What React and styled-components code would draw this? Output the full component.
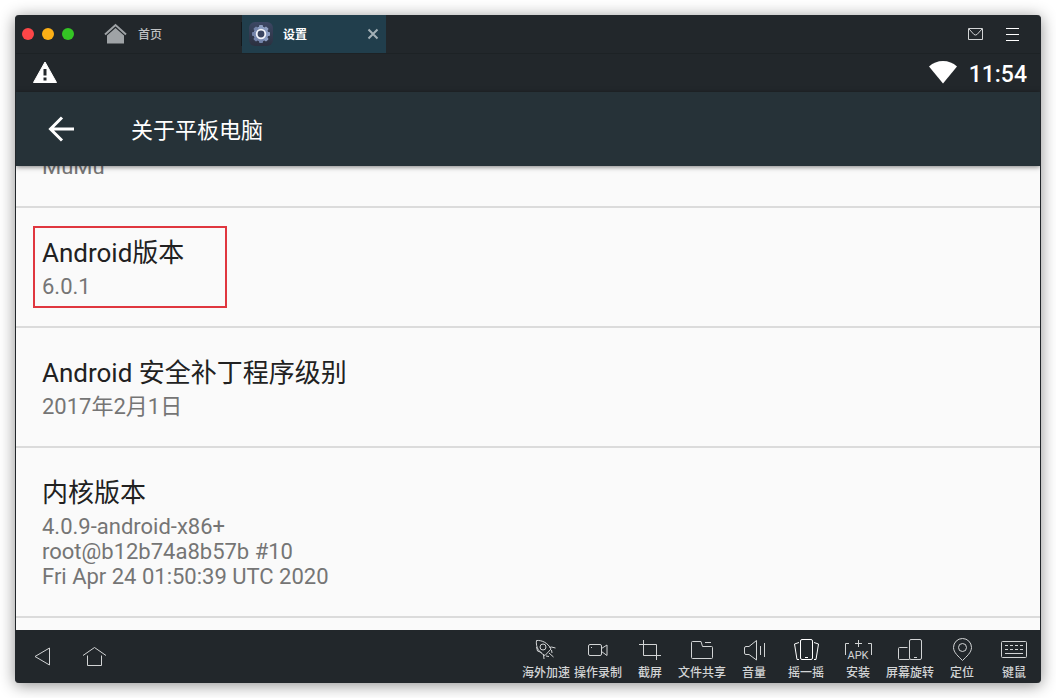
import React from "react";
import styled, { createGlobalStyle } from "styled-components";

const GlobalStyle = createGlobalStyle`
  *, *::before, *::after { box-sizing: border-box; }
  body {
    margin: 0;
    background: #ffffff;
    font-family: Roboto, "Noto Sans CJK SC", sans-serif;
  }
  button {
    border: 0;
    padding: 0;
    background: none;
    color: inherit;
    font: inherit;
    cursor: pointer;
  }
  svg { display: block; flex: none; }
`;

const Page = styled.div`
  display: flex;
  min-height: 100vh;
  padding: 15px;
`;

const Window = styled.div`
  flex: 1;
  min-width: 0;
  display: flex;
  flex-direction: column;
  overflow: hidden;
  background: #22272b;
  border: solid #22272b;
  border-width: 0 1px;
  border-radius: 4px;
  box-shadow: 0 2px 16px rgba(0, 0, 0, 0.45);
`;

const TitleBar = styled.header`
  display: flex;
  height: 38px;
  align-items: center;
  padding-right: 20px;
`;

const TrafficLights = styled.div`
  display: flex;
  gap: 8px;
  padding-left: 6px;
`;

const Light = styled.button`
  width: 12px;
  height: 12px;
  border-radius: 50%;
  background: ${(p) => p.$color};
`;

const HomeTab = styled.button`
  display: flex;
  align-items: center;
  gap: 11px;
  width: 168px;
  height: 24px;
  padding-left: 30px;
  border-right: 1px solid #14181b;
  font-size: 12px;
  font-weight: 500;
  line-height: 20px;
  color: #c0c2c4;
`;

const ActiveTab = styled.div`
  display: flex;
  align-items: center;
  width: 144px;
  height: 38px;
  padding: 0 7px;
  background: #213e4c;
  color: #ffffff;
  font-size: 12px;
  font-weight: 700;
  line-height: 20px;
`;

const TabButton = styled.button`
  flex: 1;
  display: flex;
  align-items: center;
  gap: 10px;
`;

const TabText = styled.span`
  padding-top: 2px;
`;

const TitleActions = styled.div`
  display: flex;
  gap: 20px;
  margin-left: auto;
`;

const StatusBar = styled.div`
  display: flex;
  align-items: center;
  height: 39px;
  padding: 0 13px 0 16px;
  border-top: 1px solid #1d2225;
  color: #ffffff;
`;

const StatusRight = styled.div`
  display: flex;
  align-items: center;
  gap: 12px;
  margin-left: auto;
  font-size: 23px;
  font-weight: 500;
  line-height: 34px;
`;

const Clock = styled.time`
  padding-top: 4px;
`;

const AppBar = styled.div`
  position: relative;
  z-index: 1;
  display: flex;
  align-items: center;
  gap: 52px;
  height: 74px;
  padding-left: 31px;
  background: #263238;
  color: #ffffff;
  box-shadow: 0 1px 5px rgba(0, 0, 0, 0.5);
`;

const AppTitle = styled.h1`
  margin: 0;
  padding-top: 4px;
  font-size: 22px;
  font-weight: 400;
  line-height: 32px;
`;

const Settings = styled.ul`
  flex: 1;
  margin: 0;
  padding: 0;
  list-style: none;
  overflow: hidden;
  background: #fafafa;
`;

const Item = styled.li`
  position: relative;
  padding: 28px 26px 27px;
  border-bottom: 2px solid #dbdbdb;
`;

const ScrolledItem = styled(Item)`
  display: flex;
  align-items: flex-end;
  height: 42px;
  padding-top: 0;
`;

const ItemTitle = styled.h2`
  margin: 0 0 4px;
  color: #212121;
  font-size: 26px;
  font-weight: 400;
  line-height: 34px;
`;

const Summary = styled.p`
  margin: 0;
  color: #757575;
  font-size: 22px;
  line-height: 25px;
  white-space: pre-line;
`;

const Highlight = styled.span`
  position: absolute;
  top: 18px;
  left: 17px;
  width: 194px;
  height: 82px;
  border: 2px solid #e0363f;
  pointer-events: none;
`;

const BottomBar = styled.footer`
  display: flex;
  justify-content: space-between;
  height: 53px;
  color: #d2d4d5;
`;

const NavKeys = styled.nav`
  display: flex;
  align-items: center;
  gap: 28px;
  padding-left: 14px;
`;

const Tools = styled.div`
  display: flex;
`;

const ToolButton = styled.button`
  display: flex;
  flex-direction: column;
  align-items: center;
  gap: 1px;
  width: 52px;
  padding-top: 8px;
  font-size: 12px;
  font-weight: 500;
  line-height: 20px;
  white-space: nowrap;
`;

const Line = ({ w = 30, h = 24, children, ...rest }) => (
  <svg
    width={w}
    height={h}
    viewBox={`0 0 ${w} ${h}`}
    fill="none"
    stroke="currentColor"
    aria-hidden="true"
    {...rest}
  >
    {children}
  </svg>
);

const tools = [
  {
    label: "海外加速",
    icon: (
      <Line>
        <path d="M5.500 2.500C11 2 17 5 20 11L14 17.500C8 14.500 4.500 9 5.500 2.500Z" />
        <circle cx="12" cy="9" r="3" />
        <path d="M18.500 9.500l2-.5 4 1M5.500 9l1 4 4 1.500M12.500 16.500l.5 4.500M18 15l4.500 4M15 18l3 .5M20.500 12l.5 3" />
      </Line>
    ),
  },
  {
    label: "操作录制",
    icon: (
      <Line>
        <rect x="5.500" y="6.500" width="13" height="11" rx="1.500" />
        <path d="M18.500 10.500 24 7v10.500l-5.500-4M8 9.500h1" />
      </Line>
    ),
  },
  {
    label: "截屏",
    icon: (
      <Line>
        <path d="M8.500 2v15.500H26M4 6.500h17.500V22" />
      </Line>
    ),
  },
  {
    label: "文件共享",
    icon: (
      <Line>
        <path d="M5.500 3.500H14l1.500 5h9a1 1 0 0 1 1 1v10a1 1 0 0 1-1 1h-19a1 1 0 0 1-1-1v-15a1 1 0 0 1 1-1ZM18 4.500h6" />
      </Line>
    ),
  },
  {
    label: "音量",
    icon: (
      <Line>
        <path d="M17.500 2.500 10 8.500H7Q5.500 8.500 5.500 10v5Q5.500 16.500 7 16.500h3l7.500 5.500ZM21.500 8v9M25.500 5v14" />
      </Line>
    ),
  },
  {
    label: "摇一摇",
    icon: (
      <Line stroke="#ffffff">
        <rect x="9.500" y="1.500" width="12" height="20" rx="1.500" />
        <path d="M14 19.500h3M8 4.500 3.500 6 6 21.500h2M23 4.500 27.500 6 25 21.500h-2" />
      </Line>
    ),
  },
  {
    label: "安装",
    icon: (
      <Line>
        <path d="M6 5.500H2.500V17M25 5.500h3.500V17M12 5.500h7M15.500 2v7" />
        <text
          x="15"
          y="21"
          textAnchor="middle"
          fill="currentColor"
          stroke="none"
          fontFamily="Roboto, sans-serif"
          fontSize="11"
          fontWeight="400"
        >
          APK
        </text>
      </Line>
    ),
  },
  {
    label: "屏幕旋转",
    icon: (
      <Line>
        <rect x="14.500" y="1.500" width="12" height="20" rx="1.500" />
        <path d="M12.500 9.500H4.500a1 1 0 0 0-1 1v10a1 1 0 0 0 1 1h10M19 19.500h3" />
      </Line>
    ),
  },
  {
    label: "定位",
    icon: (
      <Line>
        <path d="M15.500 22.500C11.500 18.500 6.500 14.500 6.500 9.500a9 9 0 0 1 18 0c0 5-5 9-9 13Z" />
        <circle cx="15.500" cy="9.500" r="4" />
      </Line>
    ),
  },
  {
    label: "键鼠",
    icon: (
      <Line>
        <rect x="2.500" y="3.500" width="25" height="16" rx="1" />
        <path d="M6 7.500h18M6 11.500h18" strokeDasharray="3 2" />
        <path d="M6 15.500h18" />
      </Line>
    ),
  },
];

const items = [
  { title: "Android版本", summary: "6.0.1", marked: true },
  { title: "Android 安全补丁程序级别", summary: "2017年2月1日" },
  {
    title: "内核版本",
    summary:
      "4.0.9-android-x86+\nroot@b12b74a8b57b #10\nFri Apr 24 01:50:39 UTC 2020",
  },
];

const HomeIcon = () => (
  <svg width="23" height="22" viewBox="0 0 23 22" aria-hidden="true">
    <path d="M1 11.500 11.500 2 22 11.500" fill="none" stroke="#9fa3a6" strokeWidth="2" />
    <path d="M3 12.500 11.500 5 20 12.500v8H3Z" fill="#9fa3a6" />
  </svg>
);

const GearIcon = () => (
  <svg width="24" height="24" viewBox="0 0 24 24" aria-hidden="true">
    <defs>
      <linearGradient id="tile" x1="0" y1="0" x2="0" y2="1">
        <stop offset="0" stopColor="#3c4764" />
        <stop offset="1" stopColor="#2b303f" />
      </linearGradient>
      <linearGradient id="gear" x1="0" y1="0" x2="0" y2="1">
        <stop offset="0" stopColor="#8fa0c4" />
        <stop offset="1" stopColor="#7080a6" />
      </linearGradient>
    </defs>
    <rect width="24" height="24" rx="6" fill="url(#tile)" />
    <g fill="url(#gear)">
      <circle cx="12" cy="12" r="7.500" />
      {[0, 45, 90, 135].map((angle) => (
        <rect
          key={angle}
          x="10"
          y="3"
          width="4"
          height="18"
          rx="1"
          transform={`rotate(${angle} 12 12)`}
        />
      ))}
    </g>
    <circle cx="12" cy="12" r="4.300" fill="#3b4560" stroke="#f3f5fa" strokeWidth="1.800" />
  </svg>
);

export default function App() {
  return (
    <Page>
      <GlobalStyle />
      <Window>
        <TitleBar>
          <TrafficLights>
            <Light $color="#fc4648" aria-label="关闭" />
            <Light $color="#fdb016" aria-label="最小化" />
            <Light $color="#34c524" aria-label="最大化" />
          </TrafficLights>
          <HomeTab>
            <HomeIcon />
            <TabText>首页</TabText>
          </HomeTab>
          <ActiveTab>
            <TabButton>
              <GearIcon />
              <TabText>设置</TabText>
            </TabButton>
            <button aria-label="关闭标签页">
              <Line w={12} h={12} stroke="#a3b0b6" strokeWidth="2">
                <path d="M1.500 1.500l9 9M10.500 1.500l-9 9" />
              </Line>
            </button>
          </ActiveTab>
          <TitleActions>
            <button aria-label="消息">
              <Line w={18} h={16} stroke="#d2d4d5">
                <path d="M.500 2.500h14v11h-14ZM1 3l5 5.500q1.500 1 3 0L14 3" />
              </Line>
            </button>
            <button aria-label="菜单">
              <Line w={14} h={16} stroke="#ffffff">
                <path d="M0 2.500h13M0 8.500h13M0 14.500h13" />
              </Line>
            </button>
          </TitleActions>
        </TitleBar>
        <StatusBar>
          <svg width="26" height="24" viewBox="0 0 26 24" aria-hidden="true">
            <path d="M13 1 24.500 21.500h-23Z" fill="#ffffff" stroke="#ffffff" strokeLinejoin="round" />
            <path d="M11.500 8h3v6.500h-3ZM11.500 16.500h3v3h-3Z" fill="#22272b" />
          </svg>
          <StatusRight>
            <svg width="28" height="24" viewBox="0 0 28 24" aria-hidden="true">
              <path d="M0 5.500Q6 0 14 0t14 5.500L14 22.500Z" fill="#ffffff" />
            </svg>
            <Clock>11:54</Clock>
          </StatusRight>
        </StatusBar>
        <AppBar>
          <button aria-label="返回">
            <Line w={32} h={26} strokeWidth="3">
              <path d="M15 1.500 3.500 13 15 24.500M3.500 13H27" />
            </Line>
          </button>
          <AppTitle>关于平板电脑</AppTitle>
        </AppBar>
        <Settings>
          <ScrolledItem>
            <Summary>MuMu</Summary>
          </ScrolledItem>
          {items.map((item) => (
            <Item key={item.title}>
              <ItemTitle>{item.title}</ItemTitle>
              <Summary>{item.summary}</Summary>
              {item.marked && <Highlight />}
            </Item>
          ))}
        </Settings>
        <BottomBar>
          <NavKeys>
            <button aria-label="返回">
              <Line w={24} h={24}>
                <path d="M19.500 3v17L5 11.500Z" />
              </Line>
            </button>
            <button aria-label="主屏幕">
              <Line w={26} h={24}>
                <path d="M1 10.500 12.500 2.500 24 10.500M5.500 10.500v10h14v-10" />
              </Line>
            </button>
          </NavKeys>
          <Tools>
            {tools.map((tool) => (
              <ToolButton key={tool.label}>
                {tool.icon}
                {tool.label}
              </ToolButton>
            ))}
          </Tools>
        </BottomBar>
      </Window>
    </Page>
  );
}
